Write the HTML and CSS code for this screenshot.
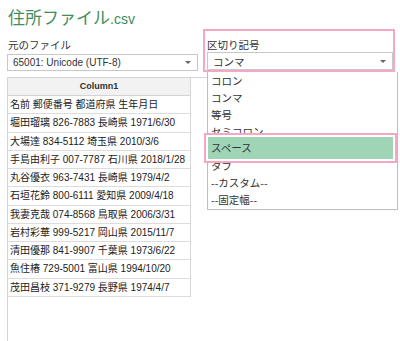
FILE: index.html
```html
<!DOCTYPE html>
<html lang="ja">
<head>
<meta charset="utf-8">
<link rel="stylesheet" href="styles.css">
</head>
<body>
<div class="page">
  <h1 class="title">住所ファイル<span class="ext">.csv</span></h1>
  <div class="controls">
    <div class="field field-left">
      <div class="label">元のファイル</div>
      <div class="select select-left"><span>65001: Unicode (UTF-8)</span><i class="arrow"></i></div>
    </div>
    <div class="field field-right">
      <div class="label">区切り記号</div>
      <div class="select"><span>コンマ</span><i class="arrow"></i></div>
      <ul class="menu">
        <li>コロン</li>
        <li>コンマ</li>
        <li>等号</li>
        <li>セミコロン</li>
        <li>スペース</li>
        <li>タブ</li>
        <li>--カスタム--</li>
        <li>--固定幅--</li>
      </ul>
      <div class="menu-hl"><div class="hl-inner">スペース</div></div>
    </div>
  </div>
  <div class="preview">
    <div class="grid">
      <div class="head">Column1</div>
      <div class="row">名前 郵便番号 都道府県 生年月日</div>
      <div class="row">堀田瑠璃 826-7883 長崎県 1971/6/30</div>
      <div class="row">大場達 834-5112 埼玉県 2010/3/6</div>
      <div class="row">手島由利子 007-7787 石川県 2018/1/28</div>
      <div class="row">丸谷優衣 963-7431 長崎県 1979/4/2</div>
      <div class="row">石垣花鈴 800-6111 愛知県 2009/4/18</div>
      <div class="row">我妻克哉 074-8568 鳥取県 2006/3/31</div>
      <div class="row">岩村彩華 999-5217 岡山県 2015/11/7</div>
      <div class="row">清田優那 841-9907 千葉県 1973/6/22</div>
      <div class="row">魚住椿 729-5001 富山県 1994/10/20</div>
      <div class="row">茂田昌枝 371-9279 長野県 1974/4/7</div>
    </div>
  </div>
</div>
</body>
</html>
```
FILE: styles.css
```css
html, body {
  margin: 0;
  padding: 0;
}
body {
  width: 400px;
  height: 341px;
  overflow: hidden;
  background: #fff;
  font-family: "Noto Sans CJK JP", sans-serif;
  color: #333;
}
.page {
  height: 341px;
  box-sizing: border-box;
  padding: 0 0 0 7px;
}
.title {
  margin: 0;
  padding: 5px 0 0 1px;
  height: 24px;
  line-height: 24px;
  font-size: 17px;
  font-weight: normal;
  color: #3f8d60;
  font-family: "Noto Sans CJK JP", sans-serif;
}
.ext {
  font-family: "Liberation Sans", sans-serif;
  font-size: 14px;
}
.controls {
  display: flex;
  gap: 5px;
  height: 43px;
}
.field {
  box-sizing: border-box;
}
.field-left {
  width: 191px;
  padding-top: 9px;
}
.field-left .select {
  margin-top: 2px;
  height: 17px;
}
.field-right {
  width: 192px;
  height: 43px;
  border: 2px solid #f4a8c6;
  padding: 7px 0 0 2px;
  position: relative;
}
.label {
  font-size: 10.5px;
  line-height: 14px;
  height: 14px;
  padding-left: 1px;
  color: #333;
}
.field-right .label {
  padding-left: 0;
}
.select {
  display: flex;
  align-items: center;
  justify-content: space-between;
  height: 18px;
  box-sizing: border-box;
  border: 1px solid #c8c8c8;
  padding: 0 6px 0 5px;
  font-size: 10.5px;
  color: #333;
  background: #fff;
}
.select-left {
  font-family: "Liberation Sans", sans-serif;
  font-size: 10px;
}
.arrow {
  width: 0;
  height: 0;
  border-left: 3px solid transparent;
  border-right: 3px solid transparent;
  border-top: 3px solid #666;
}
.menu {
  position: absolute;
  left: 2px;
  top: 41px;
  width: 191px;
  height: 138px;
  box-sizing: border-box;
  margin: 0;
  padding: 0;
  list-style: none;
  background: #fff;
  border: 1px solid #bdbdbd;
  border-top: none;
  z-index: 2;
}
.menu li {
  height: 17px;
  line-height: 17px;
  padding-left: 3px;
  font-size: 10.5px;
  color: #333;
}
.menu-hl {
  position: absolute;
  left: -1px;
  top: 102px;
  width: 193px;
  height: 30px;
  box-sizing: border-box;
  border: 2px solid #f4a8c6;
  padding: 2px;
  background: #fff;
  z-index: 3;
}
.hl-inner {
  height: 22px;
  line-height: 22px;
  background: #9fd5b6;
  padding-left: 3px;
  font-size: 10.5px;
  color: #333;
}
.preview {
  margin-top: 5px;
  width: 391px;
  height: 264px;
  box-sizing: border-box;
  border-top: 1px solid #d4d4d4;
  border-left: 1px solid #d4d4d4;
}
.grid {
  width: 183px;
  box-sizing: border-box;
  border-right: 1px solid #d6d6d6;
}
.head {
  height: 18px;
  box-sizing: border-box;
  line-height: 17px;
  background: #f2f2f2;
  border-bottom: 1px solid #d4d4d4;
  text-align: center;
  font-family: "Liberation Sans", sans-serif;
  font-weight: bold;
  font-size: 9px;
  color: #333;
}
.row {
  height: 18.25px;
  box-sizing: border-box;
  line-height: 17px;
  border-bottom: 1px solid #dcdcdc;
  padding-left: 2px;
  white-space: nowrap;
  font-family: "Liberation Sans", "Noto Sans CJK JP", sans-serif;
  font-size: 10px;
  color: #222;
}
```
